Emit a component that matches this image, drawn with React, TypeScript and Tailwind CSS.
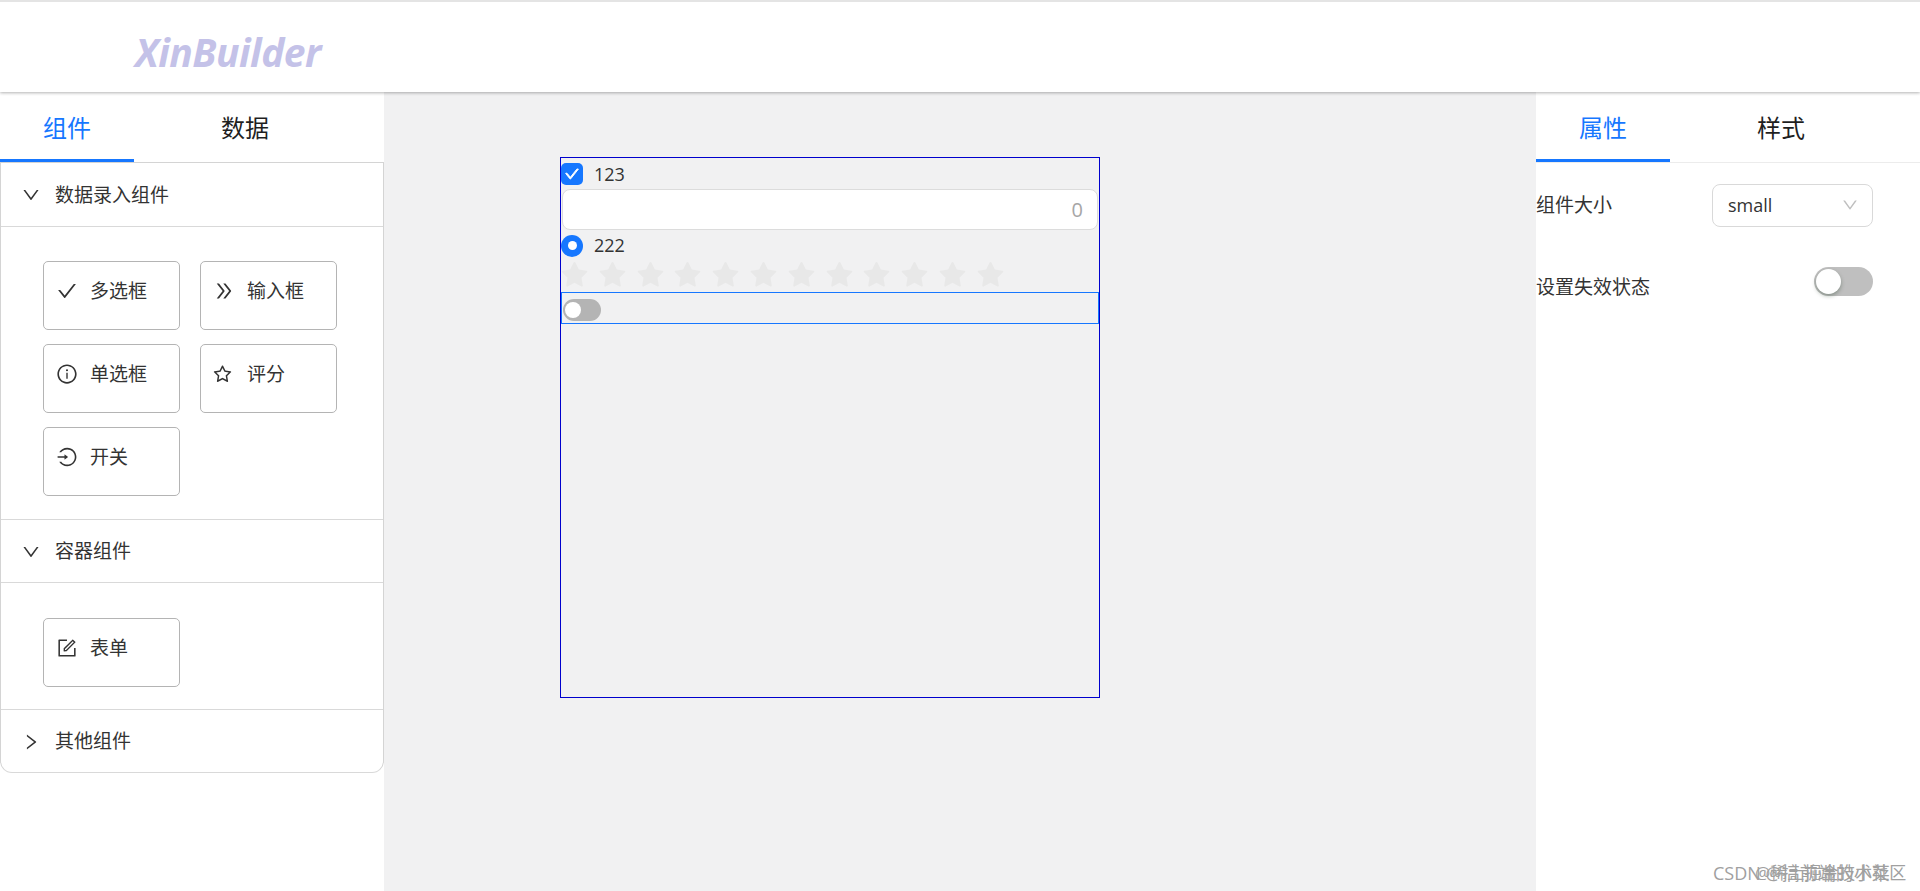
import type { ReactNode } from 'react'
import {
  AiFillStar,
  AiOutlineCheck,
  AiOutlineDoubleRight,
  AiOutlineDown,
  AiOutlineForm,
  AiOutlineInfoCircle,
  AiOutlineLogin,
  AiOutlineRight,
  AiOutlineStar,
} from 'react-icons/ai'

const font = "font-['Open_Sans','Noto_Sans_CJK_SC',sans-serif]"

function Tabs({ first, second }: { first: string; second: string }) {
  return (
    <div className="flex h-[70px] text-[24px] leading-[32px]">
      <div className="flex w-[134px] items-center justify-center border-b-[3px] border-[#1677ff] pt-[4px] text-[#1677ff]">
        {first}
      </div>
      <div className="flex w-[222px] items-center justify-center pt-[1px] text-[#1f1f1f]">{second}</div>
    </div>
  )
}

function PanelHeader({ title, open = true, short }: { title: string; open?: boolean; short?: boolean }) {
  return (
    <div className={`flex ${short ? 'h-[62px]' : 'h-[63px]'} items-center pl-[20px] pt-[1px] text-[19px] text-[#333]`}>
      {open ? <AiOutlineDown className="h-[20px] w-[20px]" /> : <AiOutlineRight className="h-[20px] w-[20px]" />}
      <span className="ml-[14px]">{title}</span>
    </div>
  )
}

function Item({ icon, label }: { icon: ReactNode; label: string }) {
  return (
    <div className="flex h-[69px] w-[137px] items-start rounded-[5px] border border-[#b4b4b4] pl-[12px] pt-[15px] text-[19px] leading-[28px] text-[#333]">
      <span className="flex h-[28px] w-[22px] items-center justify-center">{icon}</span>
      <span className="ml-[12px]">{label}</span>
    </div>
  )
}

function Toggle({ big }: { big?: boolean }) {
  return big ? (
    <div className="flex h-[29px] w-[59px] items-center rounded-full bg-[#bfbfbf] pl-[2px]">
      <div className="h-[25px] w-[25px] rounded-full bg-white shadow-[0_2px_4px_rgba(0,35,11,0.3)]" />
    </div>
  ) : (
    <div className="flex h-[22px] w-[38px] items-center rounded-full bg-[#b4b4b4] pl-[2px]">
      <div className="h-[16px] w-[16px] rounded-full bg-white" />
    </div>
  )
}

export default function App() {
  const stars = Array.from({ length: 12 }, (_, i) => i)

  return (
    <div className={`${font} relative flex h-screen w-full flex-col overflow-hidden bg-white`}>
      <header className="relative z-10 flex h-[92px] items-center border-t-2 border-[#e4e4e4] bg-white pl-[135px] shadow-[0_1px_3px_rgba(0,0,0,0.3)]">
        <span className="pt-[9px] text-[39px] font-bold italic leading-none tracking-[-0.5px] text-[#c4c2e8]">
          XinBuilder
        </span>
      </header>

      <div className="flex flex-1">
        <aside className="w-[384px] bg-white">
          <Tabs first="组件" second="数据" />
          <div className="rounded-b-[12px] border border-t-0 border-[#d4d4d4] border-b-[#d9d9d9]">
            <div className="border-t border-[#d4d4d4]" />
            <PanelHeader title="数据录入组件" />
            <div className="grid grid-cols-[137px_137px] gap-x-[20px] gap-y-[14px] border-y border-[#d9d9d9] pb-[23px] pl-[42px] pt-[34px]">
              <Item icon={<AiOutlineCheck className="h-[22px] w-[22px]" />} label="多选框" />
              <Item icon={<AiOutlineDoubleRight className="h-[22px] w-[22px]" />} label="输入框" />
              <Item icon={<AiOutlineInfoCircle className="h-[22px] w-[22px]" />} label="单选框" />
              <Item icon={<AiOutlineStar className="-ml-[4px] h-[21px] w-[21px]" />} label="评分" />
              <Item icon={<AiOutlineLogin className="h-[22px] w-[22px]" />} label="开关" />
            </div>
            <PanelHeader title="容器组件" short />
            <div className="border-y border-[#d9d9d9] pb-[22px] pl-[42px] pt-[35px]">
              <Item icon={<AiOutlineForm className="h-[22px] w-[22px]" />} label="表单" />
            </div>
            <PanelHeader title="其他组件" open={false} short />
          </div>
        </aside>

        <main className="flex-1 bg-[#f1f1f2] pl-[176px] pt-[65px]">
          <div className="h-[541px] w-[540px] border border-[#0000cd]">
            <div className="flex h-[31px] items-center pt-[1px] text-[18px] text-[#333]">
              <span className="flex h-[22px] w-[22px] items-center justify-center rounded-[5px] bg-[#1677ff]">
                <AiOutlineCheck className="h-[16px] w-[16px] text-white" strokeWidth={60} />
              </span>
              <span className="ml-[11px]">123</span>
            </div>
            <div className="mx-px flex h-[41px] items-center justify-end rounded-[8px] border border-[#dcdcdc] bg-white pr-[14px] text-[20px] text-[#a6a6a6]">
              0
            </div>
            <div className="flex h-[31px] items-center text-[18px] text-[#333]">
              <span className="flex h-[22px] w-[22px] items-center justify-center rounded-full bg-[#1677ff]">
                <span className="h-[9px] w-[9px] rounded-full bg-white" />
              </span>
              <span className="ml-[11px]">222</span>
            </div>
            <div className="-ml-[2px] flex h-[31px] items-center gap-[6.8px] pb-[2px]">
              {stars.map((i) => (
                <AiFillStar key={i} className="h-[31px] w-[31px] text-[#e8e8e8]" />
              ))}
            </div>
            <div className="flex h-[32px] items-center border border-[#1677ff] pl-[1px] pt-[3px]">
              <Toggle />
            </div>
          </div>
        </main>

        <aside className="w-[384px] bg-white">
          <div className="border-b border-[#ececec]">
            <Tabs first="属性" second="样式" />
          </div>
          <div className="flex h-[88px] items-center justify-between pb-[10px] pr-[47px] pt-[6px] text-[19px] text-[#333]">
            <span>组件大小</span>
            <div className="flex h-[43px] w-[161px] items-center justify-between rounded-[8px] border border-[#d9d9d9] pl-[15px] pr-[13px] text-[18px]">
              <span>small</span>
              <AiOutlineDown className="h-[18px] w-[18px] text-[#bfbfbf]" />
            </div>
          </div>
          <div className="flex h-[56px] items-start justify-between pr-[47px] pt-[16px] text-[19px] text-[#333]">
            <span className="mt-[6px]">设置失效状态</span>
            <Toggle big />
          </div>
        </aside>
      </div>

      <div className="absolute bottom-[5px] left-[1713px] text-[18px] leading-[26px] text-[#a0a0a0]">
        CSDN @搞前端的小菜
      </div>
      <div className="absolute bottom-[5px] left-[1755px] text-[17px] leading-[26px] text-[#a0a0a0]">
        @稀土掘金技术社区
      </div>
    </div>
  )
}
